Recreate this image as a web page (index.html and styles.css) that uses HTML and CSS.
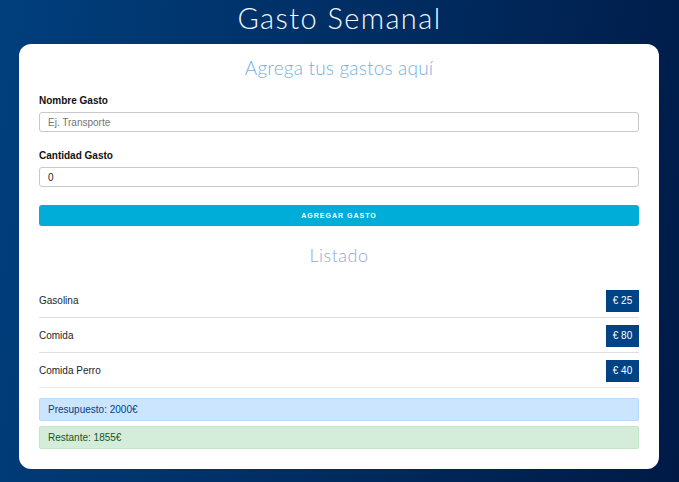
FILE: index.html
```html
<!DOCTYPE html>
<html lang="es">
<head>
<meta charset="utf-8">
<title>Gasto Semanal</title>
<link rel="stylesheet" href="styles.css">
</head>
<body>
<header class="header">
  <h1 class="main-title">Gasto Semanal</h1>
</header>
<main class="card">
  <h2 class="section-title">Agrega tus gastos aquí</h2>
  <form class="form">
    <div class="field">
      <label class="label">Nombre Gasto</label>
      <input class="input" type="text" placeholder="Ej. Transporte">
    </div>
    <div class="field">
      <label class="label">Cantidad Gasto</label>
      <input class="input" type="text" value="0">
    </div>
    <button class="button" type="button">Agregar Gasto</button>
  </form>
  <h2 class="section-title listado">Listado</h2>
  <ul class="list">
    <li class="item"><span>Gasolina</span><span class="badge">€ 25</span></li>
    <li class="item"><span>Comida</span><span class="badge">€ 80</span></li>
    <li class="item"><span>Comida Perro</span><span class="badge">€ 40</span></li>
  </ul>
  <div class="alert alert-info">Presupuesto: 2000€</div>
  <div class="alert alert-success">Restante: 1855€</div>
</main>
</body>
</html>
```
FILE: styles.css
```css
html, body {
  margin: 0;
  padding: 0;
}
body {
  width: 679px;
  height: 482px;
  overflow: hidden;
  background: linear-gradient(100deg, #003f7d 0%, #002d62 50%, #001a46 100%);
  font-family: "Liberation Sans", Arial, sans-serif;
  color: #212529;
}
.header {
  height: 44px;
  display: flex;
  justify-content: center;
  align-items: flex-start;
}
.main-title {
  margin: 1px 0 0;
  font-family: Lato, "Open Sans", sans-serif;
  font-weight: 300;
  font-size: 29px;
  line-height: 34px;
  color: #f4f8ff;
  letter-spacing: 1.4px;
}
.card {
  margin: 0 20px 0 19px;
  background: #ffffff;
  border-radius: 12px;
  padding: 12px 20px 21px;
  height: 392px;
}
.section-title {
  margin: 0;
  text-align: center;
  font-family: Lato, "Open Sans", sans-serif;
  font-weight: 300;
  font-size: 19px;
  line-height: 24px;
  color: #74b0e2;
  letter-spacing: 0.2px;
}
.form {
  margin-top: 15px;
  display: flex;
  flex-direction: column;
}
.field {
  display: flex;
  flex-direction: column;
  margin-bottom: 18px;
}
.label {
  font-weight: bold;
  font-size: 10px;
  line-height: 12px;
  margin-bottom: 5px;
  color: #111;
}
.input {
  box-sizing: border-box;
  height: 20px;
  border: 1px solid #c9c9c9;
  border-radius: 3px;
  padding: 0 8px;
  font-family: "Liberation Sans", Arial, sans-serif;
  font-size: 10px;
  color: #222;
  outline: none;
}
.input::placeholder {
  color: #757575;
}
.button {
  height: 21px;
  margin-top: 0;
  border: none;
  border-radius: 3px;
  background: #00acd8;
  color: #fff;
  text-transform: uppercase;
  font-family: "Liberation Sans", Arial, sans-serif;
  font-weight: bold;
  font-size: 7px;
  letter-spacing: 1px;
}
.listado {
  margin-top: 17px;
  color: #94a8d8;
  font-size: 18px;
  letter-spacing: 0.5px;
}
.list {
  list-style: none;
  margin: 16px 0 0;
  padding: 0;
}
.item {
  display: flex;
  justify-content: space-between;
  align-items: center;
  height: 34px;
  border-bottom: 1px solid #dedede;
  font-size: 10px;
}
.item:last-child {
  border-bottom-color: #ececec;
}
.badge {
  background: #004385;
  color: #fff;
  font-size: 10px;
  width: 33px;
  height: 22px;
  display: flex;
  align-items: center;
  justify-content: center;
  margin-top: 1px;
}
.alert {
  box-sizing: border-box;
  height: 23px;
  border: 1px solid;
  border-radius: 2px;
  padding: 0 8px;
  font-size: 10px;
  display: flex;
  align-items: center;
}
.alert-info {
  margin-top: 10px;
  background: #cce5ff;
  border-color: #b8daff;
  color: #004085;
}
.alert-success {
  margin-top: 5px;
  background: #d4edda;
  border-color: #c3e6cb;
  color: #155724;
}
```
